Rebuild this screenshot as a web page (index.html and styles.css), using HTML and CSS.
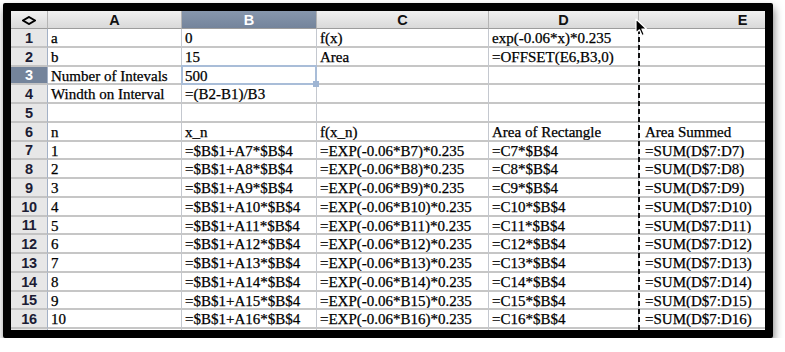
FILE: index.html
```html
<!DOCTYPE html>
<html lang="en">
<head>
    <meta charset="UTF-8">
    <meta name="viewport" content="width=device-width, initial-scale=1.0">
    <title>Riemann Sum Sheet</title>
    <link rel="stylesheet" href="styles.css">
</head>
<body>

    <div class="frame">
        <div class="sheet">
            <!-- column headers -->
            <div class="corner">
                <svg width="14" height="9" viewBox="0 0 14 9"><path d="M7 1 L13 4.5 L7 8 L1 4.5 Z" fill="none" stroke="#000" stroke-width="2"/></svg>
            </div>
            <div class="col-head">A</div>
            <div class="col-head selected">B</div>
            <div class="col-head">C</div>
            <div class="col-head">D</div>
            <div class="col-head">E</div>

            <div class="row-head">1</div>
            <div class="cell">a</div>
            <div class="cell">0</div>
            <div class="cell">f(x)</div>
            <div class="cell">exp(-0.06*x)*0.235</div>
            <div class="cell e"></div>

            <div class="row-head">2</div>
            <div class="cell">b</div>
            <div class="cell">15</div>
            <div class="cell">Area</div>
            <div class="cell">=OFFSET(E6,B3,0)</div>
            <div class="cell e"></div>

            <div class="row-head selected">3</div>
            <div class="cell">Number of Intevals</div>
            <div class="cell active">500</div>
            <div class="cell"></div>
            <div class="cell"></div>
            <div class="cell e"></div>

            <div class="row-head">4</div>
            <div class="cell">Windth on Interval</div>
            <div class="cell">=(B2-B1)/B3</div>
            <div class="cell"></div>
            <div class="cell"></div>
            <div class="cell e"></div>

            <div class="row-head">5</div>
            <div class="cell"></div>
            <div class="cell"></div>
            <div class="cell"></div>
            <div class="cell"></div>
            <div class="cell e"></div>

            <div class="row-head">6</div>
            <div class="cell">n</div>
            <div class="cell">x_n</div>
            <div class="cell">f(x_n)</div>
            <div class="cell">Area of Rectangle</div>
            <div class="cell e">Area Summed</div>

            <div class="row-head">7</div>
            <div class="cell">1</div>
            <div class="cell">=$B$1+A7*$B$4</div>
            <div class="cell">=EXP(-0.06*B7)*0.235</div>
            <div class="cell">=C7*$B$4</div>
            <div class="cell e">=SUM(D$7:D7)</div>

            <div class="row-head">8</div>
            <div class="cell">2</div>
            <div class="cell">=$B$1+A8*$B$4</div>
            <div class="cell">=EXP(-0.06*B8)*0.235</div>
            <div class="cell">=C8*$B$4</div>
            <div class="cell e">=SUM(D$7:D8)</div>

            <div class="row-head">9</div>
            <div class="cell">3</div>
            <div class="cell">=$B$1+A9*$B$4</div>
            <div class="cell">=EXP(-0.06*B9)*0.235</div>
            <div class="cell">=C9*$B$4</div>
            <div class="cell e">=SUM(D$7:D9)</div>

            <div class="row-head">10</div>
            <div class="cell">4</div>
            <div class="cell">=$B$1+A10*$B$4</div>
            <div class="cell">=EXP(-0.06*B10)*0.235</div>
            <div class="cell">=C10*$B$4</div>
            <div class="cell e">=SUM(D$7:D10)</div>

            <div class="row-head">11</div>
            <div class="cell">5</div>
            <div class="cell">=$B$1+A11*$B$4</div>
            <div class="cell">=EXP(-0.06*B11)*0.235</div>
            <div class="cell">=C11*$B$4</div>
            <div class="cell e">=SUM(D$7:D11)</div>

            <div class="row-head">12</div>
            <div class="cell">6</div>
            <div class="cell">=$B$1+A12*$B$4</div>
            <div class="cell">=EXP(-0.06*B12)*0.235</div>
            <div class="cell">=C12*$B$4</div>
            <div class="cell e">=SUM(D$7:D12)</div>

            <div class="row-head">13</div>
            <div class="cell">7</div>
            <div class="cell">=$B$1+A13*$B$4</div>
            <div class="cell">=EXP(-0.06*B13)*0.235</div>
            <div class="cell">=C13*$B$4</div>
            <div class="cell e">=SUM(D$7:D13)</div>

            <div class="row-head">14</div>
            <div class="cell">8</div>
            <div class="cell">=$B$1+A14*$B$4</div>
            <div class="cell">=EXP(-0.06*B14)*0.235</div>
            <div class="cell">=C14*$B$4</div>
            <div class="cell e">=SUM(D$7:D14)</div>

            <div class="row-head">15</div>
            <div class="cell">9</div>
            <div class="cell">=$B$1+A15*$B$4</div>
            <div class="cell">=EXP(-0.06*B15)*0.235</div>
            <div class="cell">=C15*$B$4</div>
            <div class="cell e">=SUM(D$7:D15)</div>

            <div class="row-head">16</div>
            <div class="cell">10</div>
            <div class="cell">=$B$1+A16*$B$4</div>
            <div class="cell">=EXP(-0.06*B16)*0.235</div>
            <div class="cell">=C16*$B$4</div>
            <div class="cell e">=SUM(D$7:D16)</div>

            <div class="row-head"></div>
            <div class="cell"></div>
            <div class="cell"></div>
            <div class="cell"></div>
            <div class="cell"></div>
            <div class="cell e"></div>
        </div>

        <!-- page break marker between D and E -->
        <div class="page-break"></div>

        <!-- mouse pointer -->
        <svg class="pointer" width="13" height="19" viewBox="0 0 13 19">
            <path d="M1 1 L1 15 L4.5 11.8 L7 17.5 L9.3 16.5 L6.9 11 L11.5 11 Z" fill="#000" stroke="#fff" stroke-width="1.2" stroke-linejoin="round"/>
        </svg>
    </div>

</body>
</html>
```

FILE: styles.css
```css
body, html {
    margin: 0;
    padding: 0;
    background-color: #fff;
}
.frame {
    position: relative;
    margin: 3px 0 0 3px;
    width: 754px;
    height: 319px;
    border: 8px solid #000;
    border-radius: 2px;
    overflow: hidden;
    background-color: #fff;
    box-shadow: 1px 5px 8px rgba(0, 0, 0, 0.5);
}
.sheet {
    display: grid;
    grid-template-columns: 37px 134px 135px 172px 150px 208px;
    grid-template-rows: 18px;
    grid-auto-rows: 18.75px;
    width: 836px;
}
.corner, .col-head {
    display: flex;
    align-items: center;
    justify-content: center;
    box-sizing: border-box;
    background: linear-gradient(#f1f1f1, #d9d9d9);
    border-right: 1px solid #b4b4b4;
    border-bottom: 1px solid #9c9c9c;
    font-family: "Liberation Sans", Arial, sans-serif;
    font-weight: bold;
    font-size: 14.5px;
    color: #111;
    padding-top: 1px;
}
.corner svg {
    display: block;
}
.col-head.selected {
    background: linear-gradient(#8797ad, #74849b);
    color: #fff;
}
.row-head {
    display: flex;
    align-items: center;
    justify-content: center;
    box-sizing: border-box;
    background-color: #e7e7e7;
    border-right: 1px solid #a3b1c6;
    border-bottom: 2px solid #c3c3c3;
    font-family: "Liberation Sans", Arial, sans-serif;
    font-weight: bold;
    font-size: 14.5px;
    letter-spacing: -0.3px;
    color: #1c1c34;
    padding-top: 1px;
}
.row-head.selected {
    background-color: #74849b;
    color: #fff;
}
.cell {
    box-sizing: border-box;
    padding: 1px 0 0 3px;
    border-right: 1px solid #c4c8cf;
    border-bottom: 2px solid #c6c6c6;
    font-family: "Liberation Serif", "Times New Roman", serif;
    font-size: 15px;
    line-height: 17px;
    color: #000;
    -webkit-text-stroke: 0.25px #000;
    white-space: nowrap;
    overflow: hidden;
}
.cell.e {
    padding-left: 6px;
}
.cell.active {
    position: relative;
    overflow: visible;
}
.cell.active::before {
    content: "";
    position: absolute;
    left: -1px;
    top: -2px;
    right: -1px;
    bottom: -2px;
    border: 2px solid #a9bdd8;
}
.cell.active::after {
    content: "";
    position: absolute;
    right: -3px;
    bottom: -4px;
    width: 6px;
    height: 6px;
    background-color: #9fb5d3;
}
.page-break {
    position: absolute;
    left: 627px;
    top: 18px;
    bottom: 0;
    width: 2px;
    background: repeating-linear-gradient(to bottom, #111 0 5px, transparent 5px 8px);
}
.pointer {
    position: absolute;
    left: 624px;
    top: 7px;
}
```
